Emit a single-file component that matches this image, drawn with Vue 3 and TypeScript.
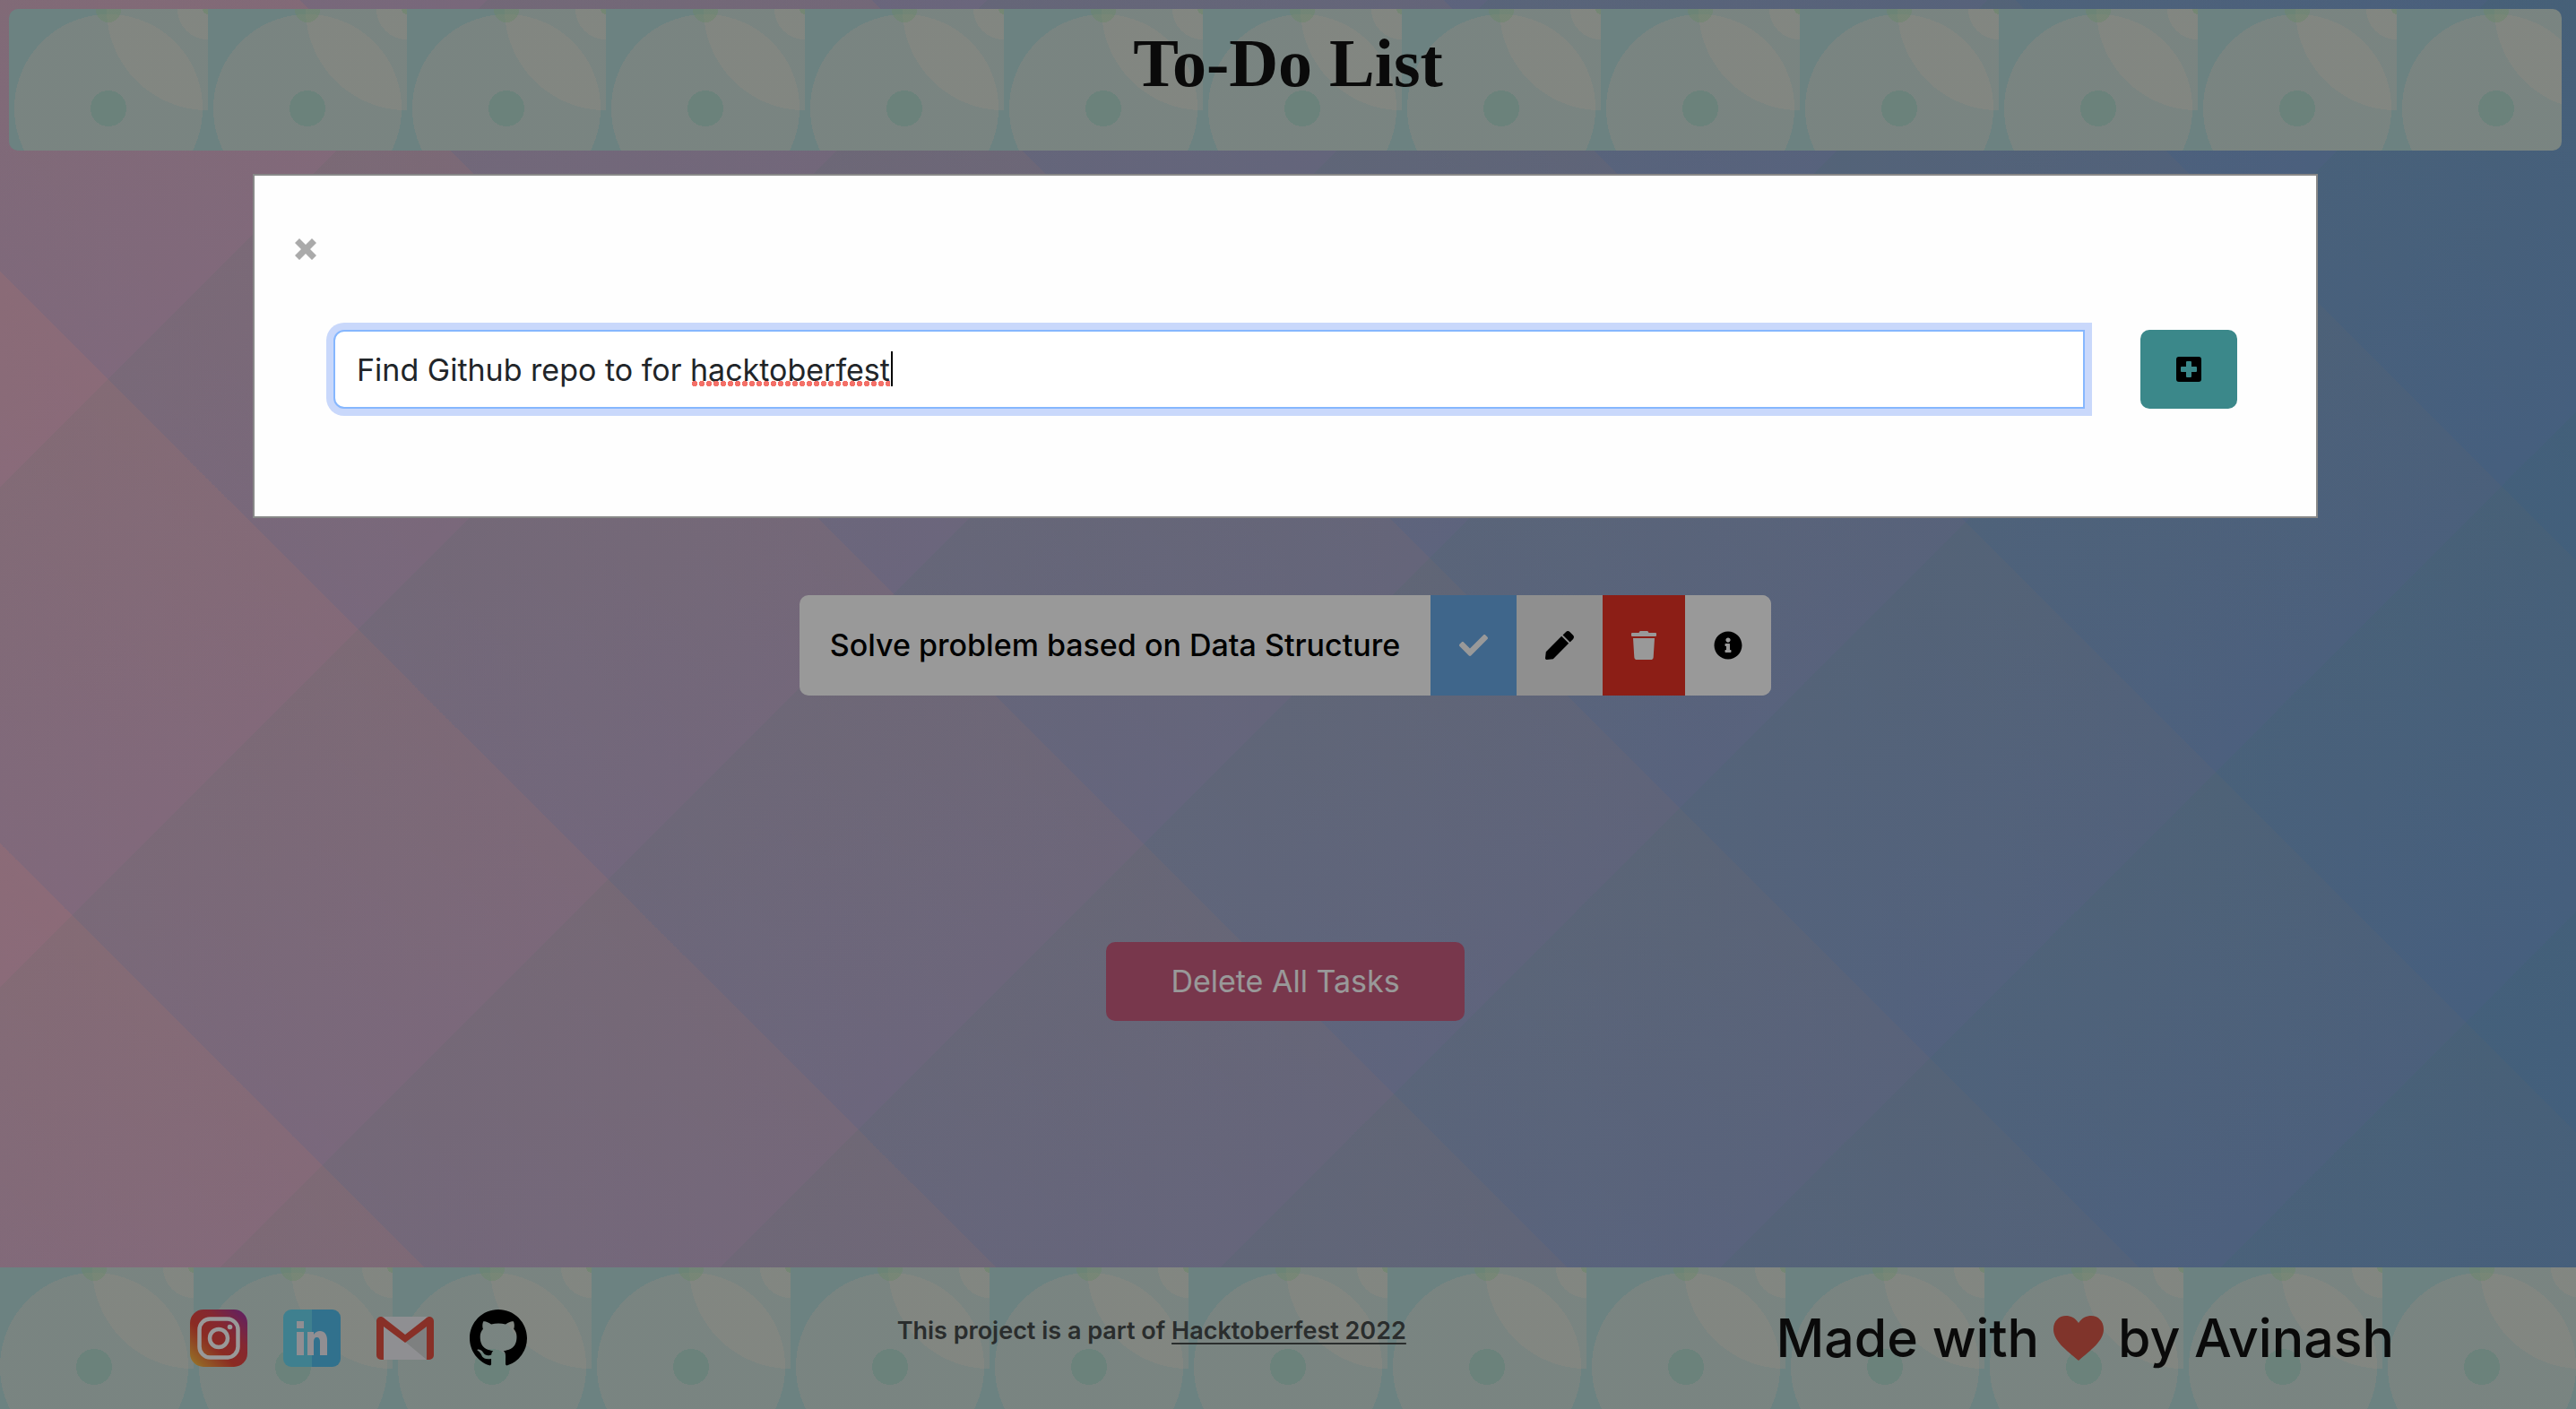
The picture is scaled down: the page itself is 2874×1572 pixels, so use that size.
<script setup lang="ts">
import { ref } from 'vue'

interface Task {
  id: number
  title: string
}

const tasks = ref<Task[]>([{ id: 1, title: 'Solve problem based on Data Structure' }])
const draft = ref('Find Github repo to for hacktoberfest')
</script>

<template>
  <div class="page">
    <svg class="backdrop" viewBox="0 0 2874 1572" preserveAspectRatio="xMinYMin slice" aria-hidden="true">
      <defs>
        <linearGradient id="base">
          <stop offset="0" stop-color="#ecb3c9" />
          <stop offset="0.5" stop-color="#aeaacb" />
          <stop offset="1" stop-color="#799fce" />
        </linearGradient>
        <linearGradient id="rising" gradientUnits="userSpaceOnUse" x1="335" y1="0" x2="654" y2="-319" spreadMethod="repeat">
          <stop offset="0" stop-color="#3c96ff" stop-opacity="0.11" />
          <stop offset="1" stop-color="#3c96ff" stop-opacity="0" />
        </linearGradient>
        <linearGradient id="falling" gradientUnits="userSpaceOnUse" x1="543" y1="0" x2="822" y2="279" spreadMethod="repeat">
          <stop offset="0" stop-color="#3cb478" stop-opacity="0.07" />
          <stop offset="1" stop-color="#3cb478" stop-opacity="0" />
        </linearGradient>
      </defs>
      <rect width="2874" height="1572" fill="url(#base)" />
      <rect width="2874" height="1572" fill="url(#rising)" />
      <rect width="2874" height="1572" fill="url(#falling)" />
    </svg>

    <header class="banner tiles">
      <h1>To-Do List</h1>
    </header>

    <main class="content">
      <ul class="tasks">
        <li v-for="task in tasks" :key="task.id" class="task">
          <span class="task-title">{{ task.title }}</span>
          <button class="act done" type="button" aria-label="Mark as done">
            <svg width="32" height="32" viewBox="0 0 512 512"><path d="M173.898 439.404l-166.4-166.4c-9.997-9.997-9.997-26.206 0-36.204l36.203-36.204c9.997-9.998 26.207-9.998 36.204 0L192 312.69 432.095 72.596c9.997-9.997 26.207-9.997 36.204 0l36.203 36.204c9.997 9.997 9.997 26.206 0 36.204l-294.4 294.401c-9.998 9.997-26.207 9.997-36.204-.001z" /></svg>
          </button>
          <button class="act edit" type="button" aria-label="Edit task">
            <svg width="32" height="32" viewBox="0 0 512 512"><path d="M290.74 93.24l128.02 128.02-277.99 277.99-114.14 12.6C11.35 513.54-1.56 500.62.14 485.34l12.7-114.22 277.9-277.88zm207.2-19.06l-60.11-60.11c-18.75-18.75-49.16-18.75-67.91 0l-56.55 56.55 128.02 128.02 56.55-56.55c18.75-18.76 18.75-49.16 0-67.91z" /></svg>
          </button>
          <button class="act remove" type="button" aria-label="Delete task">
            <svg width="28" height="32" viewBox="0 0 448 512"><path d="M432 32H312l-9.4-18.7A24 24 0 0 0 281.1 0H166.8a23.72 23.72 0 0 0-21.4 13.3L136 32H16A16 16 0 0 0 0 48v32a16 16 0 0 0 16 16h416a16 16 0 0 0 16-16V48a16 16 0 0 0-16-16zM53.2 467a48 48 0 0 0 47.9 45h245.8a48 48 0 0 0 47.9-45L416 128H32z" /></svg>
          </button>
          <button class="act info" type="button" aria-label="Task details">
            <svg width="32" height="32" viewBox="0 0 512 512"><path d="M256 8C119.043 8 8 119.083 8 256c0 136.997 111.043 248 248 248s248-111.003 248-248C504 119.083 392.957 8 256 8zm0 110c23.196 0 42 18.804 42 42s-18.804 42-42 42-42-18.804-42-42 18.804-42 42-42zm56 254c0 6.627-5.373 12-12 12h-88c-6.627 0-12-5.373-12-12v-24c0-6.627 5.373-12 12-12h12v-64h-12c-6.627 0-12-5.373-12-12v-24c0-6.627 5.373-12 12-12h64c6.627 0 12 5.373 12 12v100h12c6.627 0 12 5.373 12 12v24z" /></svg>
          </button>
        </li>
      </ul>
      <button class="delete-all" type="button">Delete All Tasks</button>
    </main>

    <footer class="footer tiles">
      <nav class="social" aria-label="Social links">
        <a href="#instagram" aria-label="Instagram">
          <svg width="64" height="64" viewBox="0 0 64 64">
            <defs>
              <linearGradient id="insta" x1="0" y1="1" x2="1" y2="0">
                <stop offset="0" stop-color="#ffd24c" />
                <stop offset="0.12" stop-color="#f5a23f" />
                <stop offset="0.4" stop-color="#e8483a" />
                <stop offset="0.65" stop-color="#dd4452" />
                <stop offset="1" stop-color="#9a35ae" />
              </linearGradient>
            </defs>
            <rect width="64" height="64" rx="15" fill="url(#insta)" />
            <rect x="10.500" y="10.500" width="43" height="43" rx="12" fill="none" stroke="#fff" stroke-width="4.500" />
            <circle cx="32" cy="32" r="10" fill="none" stroke="#fff" stroke-width="4.500" />
            <circle cx="44.500" cy="19.500" r="2.800" fill="#fff" />
          </svg>
        </a>
        <a href="#linkedin" aria-label="LinkedIn">
          <svg width="64" height="64" viewBox="0 0 64 64">
            <path d="M9 0h23v64H9a9 9 0 0 1-9-9V9a9 9 0 0 1 9-9z" fill="#69d6ef" />
            <path d="M32 0h23a9 9 0 0 1 9 9v46a9 9 0 0 1-9 9H32z" fill="#52bdec" />
            <path d="M15 13h8v8h-8zM15 25h8v26h-8zM27 25h7v3c2-3 4-4 7-4 5 0 8 4 8 10v17h-8V36c0-3-1-5-3.500-5S34 33 34 36v15h-7z" fill="#f2edf4" />
          </svg>
        </a>
        <a href="#mail" aria-label="Gmail">
          <svg width="64" height="48" viewBox="0 0 64 48">
            <path d="M6 0h52v48H6z" fill="#efeff4" />
            <path d="M32 28l26-20v40H56z" fill="#d2d5d5" />
            <path d="M8 11v37H5a5 5 0 0 1-5-5V5C0 1 5-2 9 2l23 18L55 2c4-4 9-1 9 3v38a5 5 0 0 1-5 5h-3V11L32 29z" fill="#e35142" />
          </svg>
        </a>
        <a href="#github" aria-label="GitHub">
          <svg width="64" height="64" viewBox="0 0 16 16"><path d="M8 0C3.580 0 0 3.580 0 8c0 3.540 2.290 6.530 5.470 7.590.4.070.55-.17.55-.38 0-.19-.01-.82-.01-1.490-2.010.37-2.530-.49-2.690-.94-.09-.23-.48-.94-.82-1.130-.28-.15-.68-.52-.01-.53.63-.01 1.080.58 1.230.82.72 1.210 1.870.87 2.330.66.07-.52.28-.87.51-1.070-1.780-.2-3.640-.89-3.640-3.950 0-.87.31-1.590.82-2.150-.08-.2-.36-1.020.08-2.120 0 0 .67-.21 2.200.82.64-.18 1.320-.27 2-.27s1.360.09 2 .27c1.530-1.040 2.200-.82 2.200-.82.44 1.100.16 1.920.08 2.120.51.56.82 1.270.82 2.150 0 3.070-1.870 3.750-3.650 3.950.29.25.54.73.54 1.480 0 1.070-.01 1.930-.01 2.200 0 .21.15.46.55.38A8.010 8.010 0 0 0 16 8c0-4.420-3.580-8-8-8z" /></svg>
        </a>
      </nav>
      <p class="project">This project is a part of <a href="#hacktoberfest">Hacktoberfest 2022</a></p>
      <p class="credit">
        <span>Made with</span>
        <svg width="56" height="50" viewBox="0 0 56 50" role="img" aria-label="love"><path d="M28 8C32 2 37 0 42 0c8 0 14 6 14 15 0 13-14 23-28 35C14 38 0 28 0 15 0 6 6 0 14 0c5 0 10 2 14 8z" /></svg>
        <span>by Avinash</span>
      </p>
    </footer>

    <div class="overlay">
      <section class="modal" role="dialog" aria-label="Add a task">
        <button class="close" type="button" aria-label="Close">
          <svg width="24" height="24" viewBox="0 0 24 24"><path d="M5 0l7 7 7-7 5 5-7 7 7 7-5 5-7-7-7 7-5-5 7-7-7-7z" /></svg>
        </button>
        <form class="entry" @submit.prevent>
          <div class="field">
            <input v-model="draft" type="text" aria-label="Task" spellcheck="false" />
            <i class="misspelt"></i>
            <i class="caret"></i>
          </div>
          <button class="add" type="submit" aria-label="Add task">
            <svg width="28" height="28" viewBox="0 0 28 28"><path fill-rule="evenodd" d="M3 0h22a3 3 0 0 1 3 3v22a3 3 0 0 1-3 3H3a3 3 0 0 1-3-3V3a3 3 0 0 1 3-3zm9 5a1 1 0 0 0-1 1v5H6a1 1 0 0 0-1 1v4a1 1 0 0 0 1 1h5v5a1 1 0 0 0 1 1h4a1 1 0 0 0 1-1v-5h5a1 1 0 0 0 1-1v-4a1 1 0 0 0-1-1h-5V6a1 1 0 0 0-1-1z" /></svg>
          </button>
        </form>
      </section>
    </div>
  </div>
</template>

<style>
body {
  margin: 0;
}
</style>

<style scoped>
.page {
  position: relative;
  display: flex;
  flex-direction: column;
  min-height: 100vh;
  overflow: hidden;
  font-family: Inter, "Open Sans", sans-serif;
  font-size: 34px;
  line-height: 48px;
  color: #000;
}

.page * {
  box-sizing: border-box;
}

.page button {
  border: 0;
  padding: 0;
  font: inherit;
  cursor: pointer;
}

.page svg {
  display: block;
}

.backdrop {
  position: absolute;
  inset: 0;
  width: 100%;
  height: 100%;
}

.tiles {
  position: relative;
  background-color: #b4d9d7;
  background-image:
    radial-gradient(circle at 222px 0, rgba(180, 224, 180, 0.6) 6px, transparent 6px),
    radial-gradient(circle at 111px 1px, rgba(180, 224, 180, 0.5) 14px, transparent 14px),
    radial-gradient(circle at 111px 111px, #b3d9ce 20px, transparent 20px),
    radial-gradient(circle at 222px 0, rgba(245, 230, 215, 0.35) 34px, transparent 34px),
    radial-gradient(circle at 222px 0, rgba(245, 230, 215, 0.35) 113px, transparent 113px),
    radial-gradient(circle at 111px 111px, rgba(245, 230, 215, 0.35) 105px, transparent 105px);
  background-size: 222px 222px;
}

.banner {
  height: 158px;
  margin: 10px 16px 0 10px;
  border-radius: 10px;
  text-align: center;
}

h1 {
  margin: 0;
  padding: 16px 0 0 6px;
  font-family: "Liberation Serif", serif;
  font-size: 76px;
  line-height: 88px;
  font-weight: 700;
  color: #111;
}

.content {
  position: relative;
  display: flex;
  flex-direction: column;
  align-items: center;
  padding: 496px 6px 0 0;
}

.tasks {
  margin: 0 0 275px;
  padding: 0;
  list-style: none;
}

.task {
  display: flex;
  height: 112px;
  border-radius: 10px;
  overflow: hidden;
  background: #fff;
}

.task-title {
  width: 704px;
  padding: 32px 0;
  font-weight: 500;
  text-align: center;
  white-space: nowrap;
}

.act {
  display: flex;
  align-items: center;
}

.page .act {
  padding: 0 32px;
}

.done {
  background: #6aabe8;
  fill: #fff;
}

.edit {
  background: #eee;
}

.remove {
  background: #e93226;
  fill: #fff;
}

.info {
  background: #fff;
}

.delete-all {
  width: 400px;
  height: 88px;
  border-radius: 10px;
  background: #c85d7f;
  color: #fff;
}

.footer {
  display: flex;
  align-items: center;
  justify-content: space-between;
  height: 158px;
  margin-top: auto;
  padding: 0 203px 0 212px;
  background-position: -6px 0;
}

.social {
  display: flex;
  align-items: center;
  gap: 40px;
}

p {
  margin: 0;
}

.project {
  padding-bottom: 16px;
  font-size: 27px;
  font-weight: 600;
  color: #464b4b;
}

.project a {
  color: inherit;
  text-underline-offset: 4px;
}

.credit {
  display: flex;
  align-items: center;
  gap: 16px;
  font-size: 59px;
  font-weight: 500;
  color: #111;
}

.credit svg {
  fill: #d55748;
}

.overlay {
  position: absolute;
  inset: 0;
  padding: 194px 288px 0 282px;
  background: rgba(0, 0, 0, 0.4);
}

.modal {
  height: 384px;
  padding: 70px 88px 0;
  border: 2px solid #888;
  background: #fefefe;
}

.close {
  display: block;
  margin-left: -43px;
  background: none;
  fill: #aaa;
}

.entry {
  display: flex;
  gap: 62px;
  margin-top: 78px;
}

.field {
  position: relative;
  flex: 1;
}

.field input {
  display: block;
  width: 100%;
  height: 88px;
  padding: 0 24px;
  border: 2px solid #86b7fe;
  border-radius: 12px 0 0 12px;
  outline: 0;
  background: #fff;
  box-shadow: 0 0 0 8px rgba(13, 80, 240, 0.22);
  font: inherit;
  color: #212529;
}

.misspelt {
  position: absolute;
  left: 399px;
  top: 57px;
  width: 222px;
  height: 6px;
  background: radial-gradient(circle, #f47068 3px, transparent 3px) 0 0 / 8px 6px;
}

.caret {
  position: absolute;
  left: 622px;
  top: 24px;
  width: 2px;
  height: 39px;
  background: #000;
}

.add {
  display: flex;
  align-items: center;
  justify-content: center;
  width: 108px;
  height: 88px;
  border-radius: 10px;
  background: #3b888a;
}
</style>
